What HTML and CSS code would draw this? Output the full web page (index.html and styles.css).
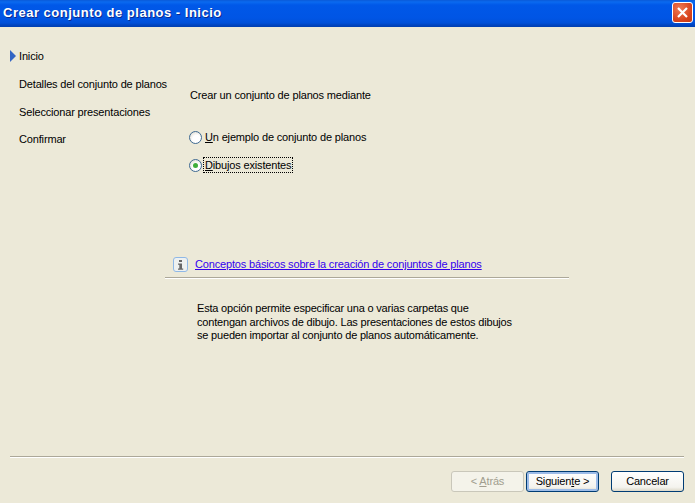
FILE: index.html
```html
<!DOCTYPE html>
<html lang="es">
<head>
<meta charset="utf-8">
<title>Crear conjunto de planos - Inicio</title>
<link rel="stylesheet" href="styles.css">
</head>
<body>
<div class="window">
  <header class="titlebar">
    <span class="title">Crear conjunto de planos - Inicio</span>
    <button class="close" aria-label="Cerrar">
      <svg width="13" height="13" viewBox="0 0 13 13"><path d="M2 2 L11 11 M11 2 L2 11" stroke="#fff" stroke-width="2.2" fill="none"/></svg>
    </button>
  </header>
  <div class="body">
    <nav class="steps">
      <div class="step current"><svg class="arrow" width="6" height="12" viewBox="0 0 6 12"><path d="M0 0 L6 6 L0 12 Z" fill="#3265c4"/></svg>Inicio</div>
      <div class="step">Detalles del conjunto de planos</div>
      <div class="step">Seleccionar presentaciones</div>
      <div class="step">Confirmar</div>
    </nav>
    <main class="content">
      <p class="lead">Crear un conjunto de planos mediante</p>
      <div class="radio-row first"><span class="radio"></span><span class="label"><u>U</u>n ejemplo de conjunto de planos</span></div>
      <div class="radio-row second"><span class="radio on"></span><span class="label focus"><u>D</u>ibujos existentes</span></div>
      <div class="info">
        <svg class="info-icon" width="15" height="15" viewBox="0 0 15 15"><rect x="0.5" y="0.5" width="14" height="14" rx="2.5" fill="#eef1f0" stroke="#8fb8e6"/><rect x="6" y="3" width="3" height="2" fill="#666"/><path d="M5 6.5h4v5h1.2v1.2H5v-1.2h1.3V7.7H5z" fill="#666"/></svg>
        <a class="link" href="#">Conceptos básicos sobre la creación de conjuntos de planos</a>
      </div>
      <p class="desc">Esta opción permite especificar una o varias carpetas que<br>contengan archivos de dibujo. Las presentaciones de estos dibujos<br>se pueden importar al conjunto de planos automáticamente.</p>
    </main>
  </div>
  <footer class="footer">
    <div class="buttons">
      <button class="btn disabled">&lt; <u>A</u>trás</button>
      <button class="btn default">Siguien<u>t</u>e &gt;</button>
      <button class="btn cancel">Cancelar</button>
    </div>
  </footer>
</div>
</body>
</html>
```
FILE: styles.css
```css
* { box-sizing: border-box; }
html, body { margin: 0; height: 100%; }
body { background: #ece9d8; font: 11px/13px "Liberation Sans", Arial, sans-serif; letter-spacing: -0.16px; color: #000; overflow: hidden; }
.window { width: 695px; height: 503px; display: flex; flex-direction: column; }
.titlebar {
  height: 27px; flex: none; display: flex; align-items: center; justify-content: space-between; padding: 0 2px 2px 3px;
  background: linear-gradient(to bottom, #0a5ad8 0, #0a6af0 2px, #0058e8 5px, #0055e5 18px, #0050d8 23px, #0044c0 25px, #003fb0 27px);
}
.title { color: #fff; font: bold 13px "Liberation Sans", Arial, sans-serif; letter-spacing: 0.5px; text-shadow: 1px 1px 0 #0a2a90; }
.close {
  width: 21px; height: 21px; padding: 0; border: 1px solid #fff; border-radius: 3px; display: flex; align-items: center; justify-content: center;
  background: radial-gradient(circle at 35% 30%, #ee7a55, #d8431c 65%, #c23a14);
}
.body { flex: 1; display: flex; min-height: 0; }
.steps { width: 165px; flex: none; padding: 23px 0 0 19px; }
.step { height: 27.8px; position: relative; white-space: nowrap; }
.arrow { position: absolute; left: -9px; top: 0; }
.content { flex: 1; padding-top: 62px; min-width: 0; }
.lead { margin: 0 0 0 25px; }
.radio-row { display: flex; align-items: center; margin-left: 24px; height: 16px; }
.radio-row.first { margin-top: 27px; }
.radio-row.second { margin-top: 12px; }
.radio {
  width: 13px; height: 13px; flex: none; border-radius: 50%; border: 1px solid #3f6a92; margin-right: 2px;
  background: radial-gradient(circle at 60% 65%, #fff 40%, #d6d2c4); position: relative;
}
.radio.on::after { content: ""; position: absolute; left: 3px; top: 3px; width: 5px; height: 5px; border-radius: 50%; background: #3fae3a; }
.label { padding: 0 1px; }
.label.focus { outline: 1px dotted #000; outline-offset: 0; line-height: 14px; }
.info { width: 404px; height: 23px; margin-top: 82px; display: flex; align-items: center; padding: 0 0 3px 8px; border-bottom: 1px solid #aca899; box-shadow: 0 1px 0 #fff; }
.info-icon { flex: none; }
.link { margin-left: 7px; color: #3300ee; white-space: nowrap; }
.desc { margin: 24px 0 0 32px; white-space: nowrap; line-height: 13.5px; letter-spacing: -0.19px; }
.footer { flex: none; height: 47px; margin: 0 11px 0 10px; border-top: 1px solid #aca899; box-shadow: 0 1px 0 0 #fff inset; display: flex; justify-content: flex-end; }
.buttons { display: flex; margin-top: 14px; height: 21px; }
.btn {
  width: 73px; height: 21px; padding: 0; font: inherit; letter-spacing: inherit; color: #000; border: 1px solid #003c74; border-radius: 3px;
  background: linear-gradient(to bottom, #fff, #f4f3ee 80%, #dcd8c8);
}
.btn.disabled { color: #a19e8f; border-color: #c9c7ba; background: #f4f3ea; margin-right: 2px; }
.btn.default { box-shadow: inset 0 0 0 2px #9dbce8; margin-right: 12px; }
```
